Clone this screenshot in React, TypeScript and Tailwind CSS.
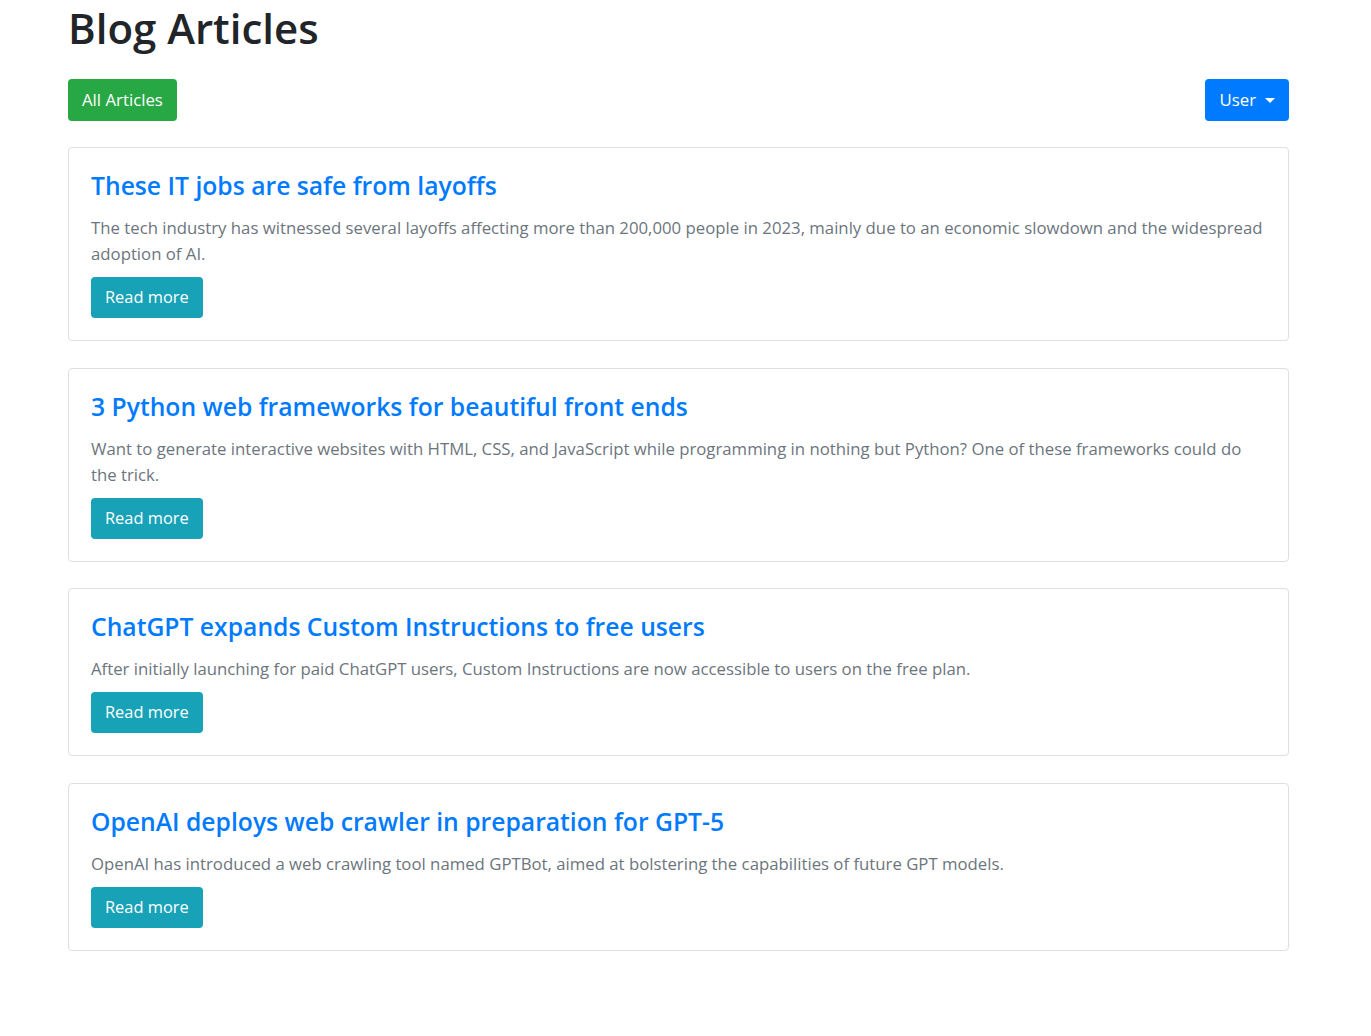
import React from "react";

const articles = [
  {
    title: "These IT jobs are safe from layoffs",
    desc: "The tech industry has witnessed several layoffs affecting more than 200,000 people in 2023, mainly due to an economic slowdown and the widespread adoption of AI.",
  },
  {
    title: "3 Python web frameworks for beautiful front ends",
    desc: "Want to generate interactive websites with HTML, CSS, and JavaScript while programming in nothing but Python? One of these frameworks could do the trick.",
  },
  {
    title: "ChatGPT expands Custom Instructions to free users",
    desc: "After initially launching for paid ChatGPT users, Custom Instructions are now accessible to users on the free plan.",
  },
  {
    title: "OpenAI deploys web crawler in preparation for GPT-5",
    desc: "OpenAI has introduced a web crawling tool named GPTBot, aimed at bolstering the capabilities of future GPT models.",
  },
];

export default function App() {
  return (
    <div
      className="min-h-[1036px] bg-white"
      style={{ fontFamily: '"Open Sans", "Noto Sans", sans-serif' }}
    >
      <div className="ml-[68px] w-[1221px]">
        <h1 className="text-[42px] leading-[48px] font-semibold text-[#212529] pt-[4px]">
          Blog Articles
        </h1>
        <div className="mt-[27px] flex items-center justify-between">
          <button className="h-[42px] px-[14px] rounded-[4px] bg-[#28a745] text-white text-[16.8px]">
            All Articles
          </button>
          <button className="h-[42px] px-[14px] rounded-[4px] bg-[#007bff] text-white text-[16.8px] flex items-center">
            User
            <span className="ml-[9px] w-0 h-0 border-l-[5px] border-r-[5px] border-t-[5px] border-l-transparent border-r-transparent border-t-white" />
          </button>
        </div>
        <div className="mt-[26px] flex flex-col gap-[26.5px]">
          {articles.map((a) => (
            <div
              key={a.title}
              className="border border-[#dfdfdf] rounded-[4px] p-[22px]"
            >
              <h4 className="pt-[1px] text-[24.7px] leading-[29px] text-[#007bff] font-semibold">
                {a.title}
              </h4>
              <p className="mt-[15px] text-[16.75px] leading-[26px] text-[#6c757d]">
                {a.desc}
              </p>
              <button className="mt-[10px] h-[41px] px-[14px] rounded-[4px] bg-[#17a2b8] text-white text-[16.4px]">
                Read more
              </button>
            </div>
          ))}
        </div>
      </div>
    </div>
  );
}
